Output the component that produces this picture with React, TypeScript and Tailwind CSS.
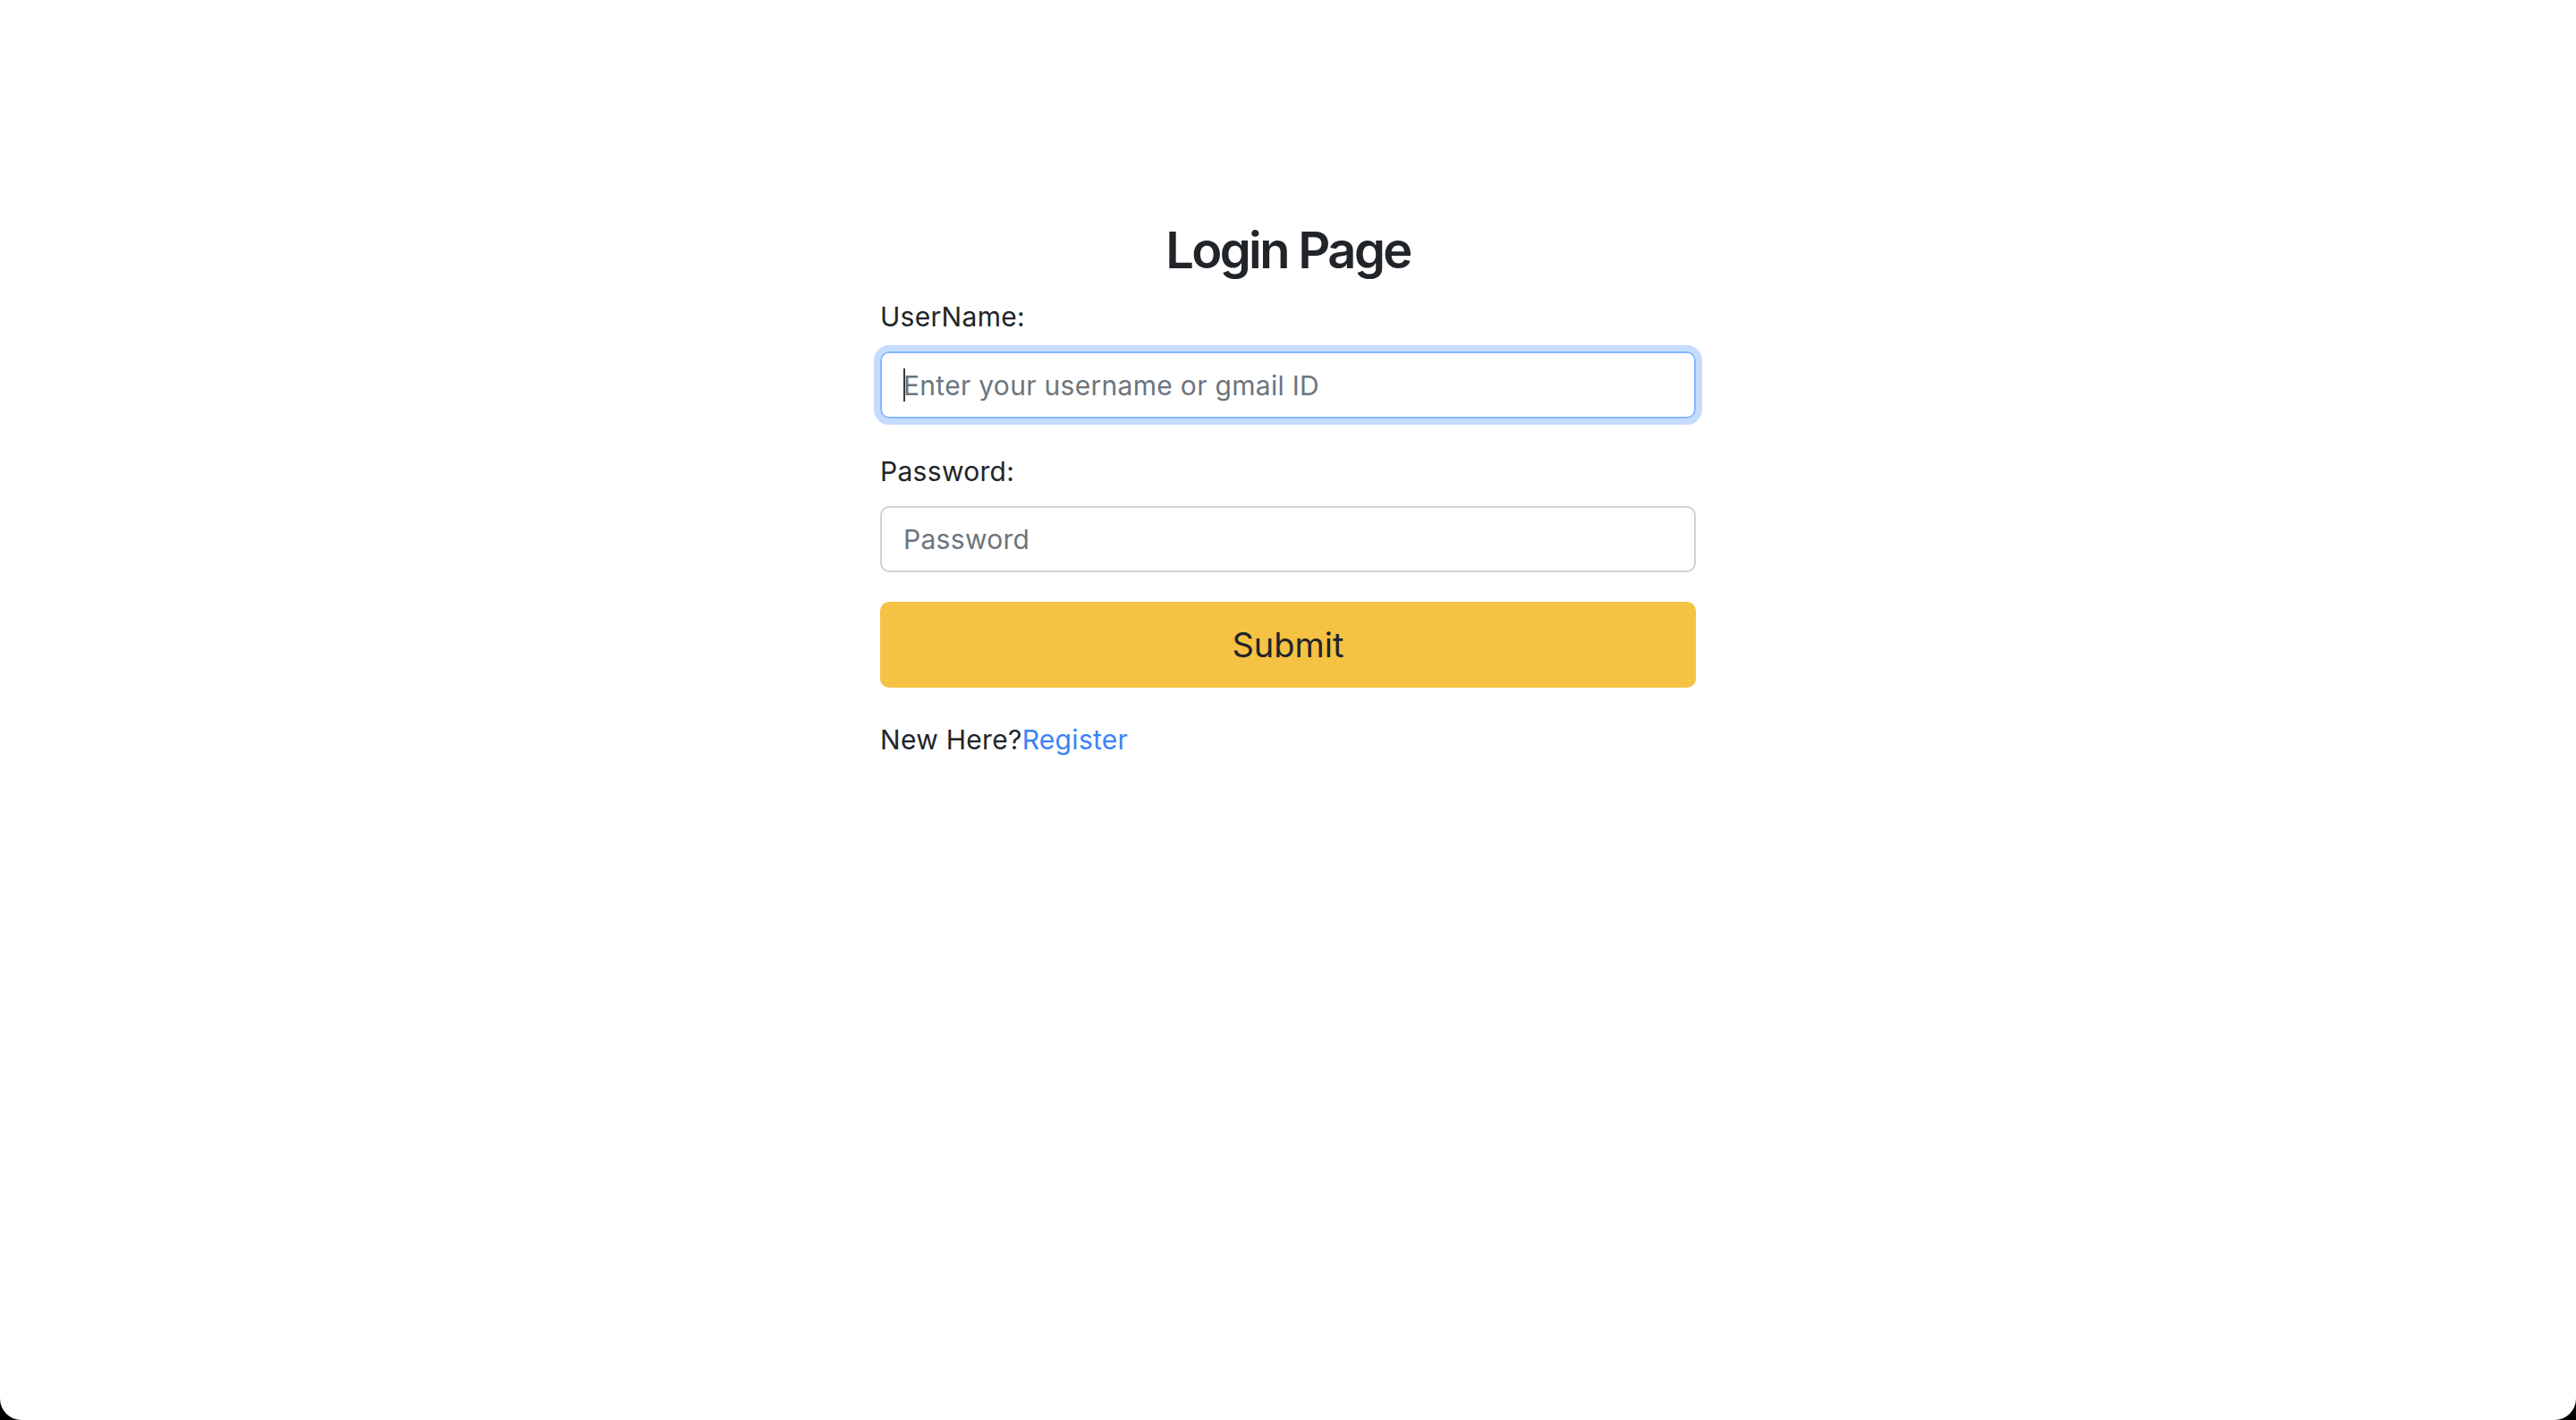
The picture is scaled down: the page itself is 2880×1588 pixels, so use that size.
import { useState } from 'react';

export default function App() {
  const [username, setUsername] = useState('');
  const [password, setPassword] = useState('');

  return (
    <div className="h-[1588px] w-full bg-black">
      <div className="h-full w-full bg-white rounded-b-[24px] font-['Inter',sans-serif] text-[#212529]">
        <div className="mx-auto w-[912px] pt-[247px]">
          <h2 className="h-[67px] text-center text-[56px] leading-[67px] font-semibold tracking-[-2.6px]">
            Login Page
          </h2>

          <form onSubmit={(e) => e.preventDefault()} className="mt-[19px] text-[30px] tracking-[0.3px]">
            <label htmlFor="username" className="block h-[42px] leading-[42px]">
              UserName:
            </label>
            <div className="relative mt-[18px]">
              <input
                id="username"
                type="text"
                autoFocus
                value={username}
                onChange={(e) => setUsername(e.target.value)}
                placeholder="Enter your username or gmail ID"
                className="block h-[75px] w-full rounded-[10px] border-2 border-[#86b7fe] px-[24px] caret-transparent outline-none ring-[7px] ring-[#c6dcfe] placeholder:text-[#6c757d]"
              />
              {username === '' && (
                <span className="pointer-events-none absolute left-[26px] top-[19px] h-[37px] w-[2px] bg-[#3a3a3a]" />
              )}
            </div>

            <label htmlFor="password" className="mt-[38px] block h-[42px] leading-[42px]">
              Password:
            </label>
            <input
              id="password"
              type="password"
              value={password}
              onChange={(e) => setPassword(e.target.value)}
              placeholder="Password"
              className="mt-[18px] block h-[74px] w-full rounded-[10px] border-2 border-[#ced4da] px-[24px] outline-none placeholder:text-[#6c757d]"
            />

            <button
              type="submit"
              className="mt-[33px] block h-[96px] w-full rounded-[10px] bg-[#f6c244] text-[38px] tracking-normal text-[#212529]"
            >
              Submit
            </button>
          </form>

          <p className="mt-[37px] h-[42px] text-[30px] leading-[42px] tracking-[0.3px]">
            New Here?<a href="#" className="text-[#3a83f6]">Register</a>
          </p>
        </div>
      </div>
    </div>
  );
}
